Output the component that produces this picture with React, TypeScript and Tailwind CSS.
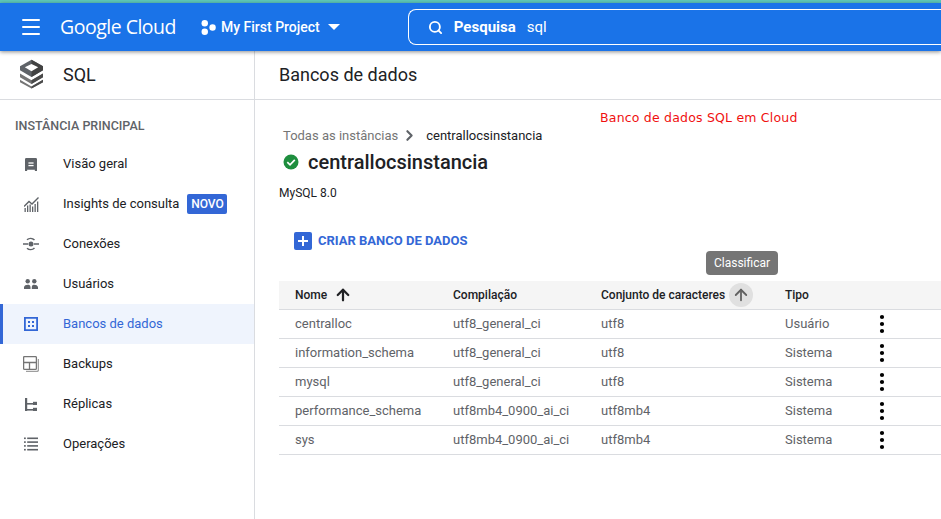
import { ArrowUp, ChevronRight, Menu, MoreVertical, Search } from "lucide-react"

const font = { fontFamily: "Roboto, 'Liberation Sans', sans-serif" }

const IconOverview = () => (
  <svg width="12" height="13" viewBox="0 0 14 15" fill="#5f6368">
    <path d="M1.5 0h11A1.5 1.5 0 0 1 14 1.500V15h-2.500v-1.500h-9V15H0V1.500A1.500 1.500 0 0 1 1.500 0z" />
    <rect x="4" y="5" width="6" height="1.500" fill="#fff" />
    <rect x="4" y="8" width="6" height="1.500" fill="#fff" />
  </svg>
)

const IconInsights = () => (
  <svg width="15" height="15" viewBox="0 0 15 15" fill="#5f6368">
    <path d="M0 9.500 5 4.500 8 7 14.500 0.500" fill="none" stroke="#5f6368" strokeWidth="1.400" />
    <rect x="0.500" y="11" width="1.300" height="4" />
    <rect x="3" y="8.500" width="1.300" height="6.500" />
    <rect x="5.500" y="7.500" width="1.300" height="7.500" />
    <rect x="8" y="9.500" width="1.300" height="5.500" />
    <rect x="10.500" y="7" width="1.300" height="8" />
    <rect x="13" y="4.500" width="1.300" height="10.500" />
  </svg>
)

const IconConnections = () => (
  <svg width="16" height="14" viewBox="0 0 16 14" fill="none" stroke="#5f6368">
    <path d="M0 7h5M11 7h5" strokeWidth="1.500" />
    <circle cx="8" cy="7" r="2.500" fill="#5f6368" stroke="none" />
    <path d="M4 2.800A5.500 5.500 0 0 1 11.500 3M11.500 11A5.500 5.500 0 0 1 4 11.200" strokeWidth="1.500" />
  </svg>
)

const IconUsers = () => (
  <svg width="14" height="10" viewBox="0 0 14 10" fill="#5f6368">
    <circle cx="3.700" cy="2.300" r="2.200" />
    <circle cx="10.300" cy="2.300" r="2.200" />
    <path d="M0 10V8.200C0 6.500 2.200 5.700 3.700 5.700S6.500 6.300 6.500 8.200V10zM7.800 10V8.200C7.800 6.300 9 5.700 10.300 5.700S14 6.500 14 8.200V10z" />
  </svg>
)

const IconDatabases = () => (
  <svg width="14" height="14" viewBox="0 0 14 14" fill="#3367d6">
    <path fillRule="evenodd" d="M0 0h14v14H0zM1.800 1.800v10.400h10.400V1.800z" />
    <rect x="4" y="4" width="2" height="2" />
    <rect x="8" y="4" width="2" height="2" />
    <rect x="4" y="8" width="2" height="2" />
    <rect x="8" y="8" width="2" height="2" />
  </svg>
)

const IconBackups = () => (
  <svg width="16" height="16" viewBox="0 0 16 16" fill="none" stroke="#757575" strokeWidth="1.300">
    <rect x="0.600" y="0.600" width="12.800" height="12.800" rx="1" />
    <path d="M0.600 6.500h12.800M6.500 6.500v6.900" />
    <path d="M15.400 3v11a1.400 1.400 0 0 1-1.400 1.400H3" stroke="#9e9e9e" />
  </svg>
)

const IconReplicas = () => (
  <svg width="12" height="13" viewBox="0 0 12 13" fill="#5f6368">
    <rect x="0" y="0" width="2.200" height="13" />
    <rect x="0" y="5" width="9" height="1.600" />
    <rect x="0" y="11" width="9" height="1.600" />
    <rect x="8" y="3.800" width="4" height="3.200" />
    <rect x="8" y="9.800" width="4" height="3.200" />
  </svg>
)

const IconOperations = () => (
  <svg width="14" height="14" viewBox="0 0 14 14" fill="#5f6368">
    <rect x="0" y="0.500" width="1.800" height="1.600" />
    <rect x="3.200" y="0.500" width="10.800" height="1.600" />
    <rect x="0" y="4.300" width="1.800" height="1.600" />
    <rect x="3.200" y="4.300" width="10.800" height="1.600" />
    <rect x="0" y="8.100" width="1.800" height="1.600" />
    <rect x="3.200" y="8.100" width="10.800" height="1.600" />
    <rect x="0" y="11.900" width="1.800" height="1.600" />
    <rect x="3.200" y="11.900" width="10.800" height="1.600" />
  </svg>
)

const navItems = [
  { label: "Visão geral", icon: <IconOverview /> },
  { label: "Insights de consulta", icon: <IconInsights />, badge: "NOVO" },
  { label: "Conexões", icon: <IconConnections /> },
  { label: "Usuários", icon: <IconUsers /> },
  { label: "Bancos de dados", icon: <IconDatabases />, active: true },
  { label: "Backups", icon: <IconBackups /> },
  { label: "Réplicas", icon: <IconReplicas /> },
  { label: "Operações", icon: <IconOperations /> },
]

const databases = [
  { name: "centralloc", collation: "utf8_general_ci", charset: "utf8", type: "Usuário" },
  { name: "information_schema", collation: "utf8_general_ci", charset: "utf8", type: "Sistema" },
  { name: "mysql", collation: "utf8_general_ci", charset: "utf8", type: "Sistema" },
  { name: "performance_schema", collation: "utf8mb4_0900_ai_ci", charset: "utf8mb4", type: "Sistema" },
  { name: "sys", collation: "utf8mb4_0900_ai_ci", charset: "utf8mb4", type: "Sistema" },
]

export default function App() {
  return (
    <div className="flex h-[519px] w-[941px] flex-col overflow-hidden bg-white" style={font}>
      <div className="h-[3px] shrink-0 bg-[#5ec8b8]" />
      <header className="relative z-10 flex h-[48px] shrink-0 items-center bg-[#1a73e8] text-white shadow-[0_1px_4px_rgba(0,0,0,0.45)]">
        <Menu className="ml-[19px] h-6 w-6" strokeWidth={2} />
        <span className="ml-[17px] w-[118px] text-[19.500px] tracking-[-0.5px] whitespace-nowrap" style={{ fontFamily: "'Open Sans', sans-serif" }}>
          Google Cloud
        </span>
        <svg className="ml-[23px]" width="15" height="15" viewBox="0 0 14 14" fill="#fff">
          <circle cx="3.500" cy="3" r="3" />
          <circle cx="10.800" cy="7" r="3" />
          <circle cx="3.500" cy="11" r="3" />
        </svg>
        <span className="ml-[5px] pt-px text-[14px] font-medium">My First Project</span>
        <span className="ml-[8px] h-0 w-0 border-x-[6px] border-t-[6px] border-x-transparent border-t-white" />
        <div className="ml-[68px] flex h-[36px] flex-1 items-center rounded-l-[8px] border border-r-0 border-white">
          <Search className="ml-[19px] h-[15px] w-[15px]" strokeWidth={3} />
          <span className="ml-[11px] text-[15px] font-bold">Pesquisa</span>
          <span className="ml-[11px] text-[15px]">sql</span>
        </div>
      </header>
      <div className="flex min-h-0 flex-1">
        <aside className="w-[255px] shrink-0 border-r border-[#dadce0]">
          <div className="flex h-[49px] items-center border-b border-[#dadce0] pb-[2px]">
            <svg className="ml-[20px]" width="23" height="30" viewBox="0 0 24 30">
              <path d="M12 0 24 7v4L12 18 0 11V7z" fill="#5f6368" />
              <path d="M12 0 24 7v4L12 18z" fill="#424242" />
              <path d="M12 4.500 19 8l-7 4-7-4z" fill="#fff" />
              <path d="M0 14.500 12 21.500 24 14.500v4L12 25.500 0 18.500z" fill="#757575" />
              <path d="M12 21.500 24 14.500v4L12 25.500z" fill="#4a4a4a" />
              <path d="M0 21 12 28 24 21v2.500L12 30 0 23.500z" fill="#757575" />
              <path d="M12 28 24 21v2.500L12 30z" fill="#4a4a4a" />
            </svg>
            <span className="ml-[20px] text-[18px] text-[#202124]">SQL</span>
          </div>
          <div className="pt-[17px] pl-[15px] text-[12.500px] font-medium leading-[17px] text-[#5f6368]">INSTÂNCIA PRINCIPAL</div>
          <nav className="mt-[10px]">
            {navItems.map((item) => (
              <div
                key={item.label}
                className={
                  item.active
                    ? "flex h-10 items-center border-l-[3px] border-[#3367d6] bg-[#eff4fd]"
                    : "flex h-10 items-center border-l-[3px] border-transparent"
                }
              >
                <span className="flex w-[60px] shrink-0 items-center justify-center pr-[4px]">{item.icon}</span>
                <span className={item.active ? "text-[13px] text-[#3367d6]" : "text-[13px] text-[#202124]"}>{item.label}</span>
                {item.badge ? (
                  <span className="ml-2 flex h-5 w-10 items-center justify-center rounded-[2px] bg-[#3367d6] text-[12px] font-medium text-white">
                    {item.badge}
                  </span>
                ) : null}
              </div>
            ))}
          </nav>
        </aside>
        <main className="relative min-w-0 flex-1">
          <div className="flex h-[49px] items-center border-b border-[#dadce0] pb-[2px] pl-6 text-[18px] text-[#202124]">Bancos de dados</div>
          <span className="absolute top-[58px] left-[345px] text-[12.500px] tracking-[0.2px] whitespace-nowrap text-[#f01010]" style={{ fontFamily: "'DejaVu Sans', sans-serif" }}>
            Banco de dados SQL em Cloud
          </span>
          <div className="mt-[27px] flex h-[17px] items-center pl-[28px] text-[13px]">
            <span className="text-[#757575]">Todas as instâncias</span>
            <ChevronRight className="mx-[3px] h-[17px] w-[17px] text-[#5f6368]" strokeWidth={3} />
            <span className="ml-[5px] text-[#202124]">centrallocsinstancia</span>
          </div>
          <div className="mt-[4px] flex h-[28px] items-center pl-[28px]">
            <svg width="16" height="16" viewBox="0 0 16 16">
              <circle cx="8" cy="8" r="7.500" fill="#1e8e3e" />
              <path d="M4.300 8.200 7 10.800 11.800 5.800" fill="none" stroke="#fff" strokeWidth="1.700" />
            </svg>
            <span className="ml-[9px] text-[20px] font-medium text-[#202124]">centrallocsinstancia</span>
          </div>
          <div className="mt-[10px] pl-6 text-[12px] leading-[14px] text-[#202124]">MySQL 8.0</div>
          <div className="mt-[32px] flex h-[18px] items-center pl-[39px]">
            <span className="flex h-[18px] w-[18px] items-center justify-center rounded-[2px] bg-[#3367d6]">
              <svg width="10" height="10" viewBox="0 0 10 10" fill="#fff">
                <rect x="4" y="0" width="2" height="10" />
                <rect x="0" y="4" width="10" height="2" />
              </svg>
            </span>
            <span className="ml-[6px] text-[13px] font-bold text-[#3367d6]">CRIAR BANCO DE DADOS</span>
          </div>
          <div className="absolute top-[200px] left-[451px] flex h-[24px] w-[72px] items-center justify-center rounded-[4px] bg-[#757575] text-[12px] text-white">
            Classificar
          </div>
          <div className="mt-[31px] ml-6 text-[12px]">
            <div className="grid h-[29px] grid-cols-[174px_148px_184px_1fr] items-center border-b border-[#dadce0] bg-[#f5f5f5] font-medium text-[#202124]">
              <div className="flex items-center pl-4">
                Nome
                <ArrowUp className="ml-[7px] h-[18px] w-[18px] text-[#202124]" strokeWidth={3} />
              </div>
              <div>Compilação</div>
              <div className="flex items-center">
                Conjunto de caracteres
                <span className="ml-[4px] flex h-6 w-6 items-center justify-center rounded-full bg-[#e0e0e0]">
                  <ArrowUp className="h-[18px] w-[18px] text-[#616161]" strokeWidth={2.400} />
                </span>
              </div>
              <div>Tipo</div>
            </div>
            {databases.map((db) => (
              <div key={db.name} className="grid h-[29px] grid-cols-[174px_148px_184px_1fr] items-center border-b border-[#dadce0] text-[13px] text-[#5f6368]">
                <div className="pl-4">{db.name}</div>
                <div>{db.collation}</div>
                <div>{db.charset}</div>
                <div className="flex items-center">
                  <span className="w-[85px]">{db.type}</span>
                  <MoreVertical className="h-6 w-6 text-black" strokeWidth={2.200} />
                </div>
              </div>
            ))}
          </div>
        </main>
      </div>
    </div>
  )
}
